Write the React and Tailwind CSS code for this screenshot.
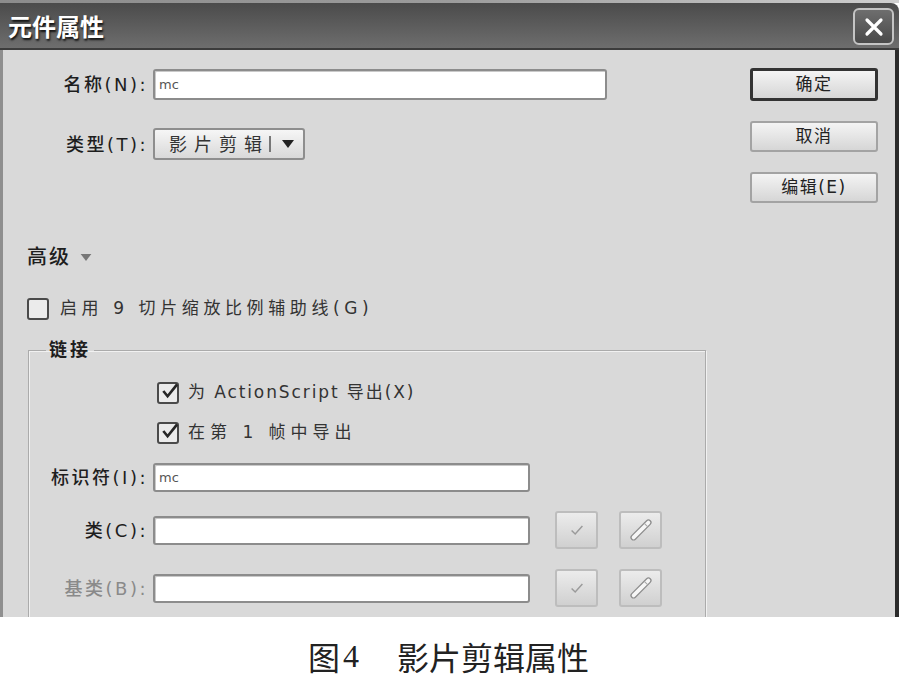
import React from "react";

function CheckBox({ checked }) {
  return (
    <span className="flex items-center justify-center w-[22px] h-[22px] border-2 border-[#4a4a4a] rounded-[3px] bg-[#ebebeb] shrink-0">
      {checked && (
        <svg viewBox="0 0 20 20" className="w-[19px] h-[19px] -mt-[3px] -mr-[3px]">
          <path d="M3.5 9.5l4.5 5.5L18 2.5" fill="none" stroke="#262626" strokeWidth="2.8" />
        </svg>
      )}
    </span>
  );
}

function Field({ className, value }) {
  return (
    <div
      className={
        "flex items-center pl-[4px] bg-white border-2 border-[#8c8c8c] rounded-[3px] shadow-[inset_1px_1px_0_#c9c9c9] text-[13px] text-[#555] font-['DejaVu_Sans',sans-serif] " +
        className
      }
    >
      {value}
    </div>
  );
}

function Btn({ children, primary }) {
  return (
    <div
      className={
        "flex items-center justify-center w-[128px] rounded-[3px] bg-gradient-to-b from-[#f4f4f4] to-[#d6d6d6] text-[17px] tracking-[1.5px] text-[#222] " +
        (primary
          ? "h-[33px] border-[3px] border-[#333]"
          : "h-[31px] border-2 border-[#a3a3a3]")
      }
    >
      {children}
    </div>
  );
}

function IconBtn({ children }) {
  return (
    <div className="flex items-center justify-center w-[43px] h-[38px] rounded-[3px] border-2 border-[#bdbdbd] bg-gradient-to-b from-[#ececec] to-[#d0d0d0]">
      {children}
    </div>
  );
}

function CheckIcon() {
  return (
    <svg viewBox="0 0 20 20" className="w-[18px] h-[18px]">
      <path d="M4 10.5l4 4L16 5.5" fill="none" stroke="#9a9a9a" strokeWidth="1.6" />
    </svg>
  );
}

function PencilIcon() {
  return (
    <svg viewBox="0 0 30 30" className="w-[30px] h-[30px]">
      <g transform="rotate(-45 15 15)">
        <rect x="2" y="12.5" width="26" height="5" rx="2.5" fill="#f6f6f6" stroke="#8e8e8e" strokeWidth="1.3" />
        <line x1="22" y1="13" x2="22" y2="17" stroke="#a8a8a8" strokeWidth="1" />
      </g>
    </svg>
  );
}

function FieldRow({ label, labelClass, children }) {
  return (
    <div className="flex items-center">
      <div className={"text-right text-[18px] tracking-[2.5px] font-medium " + labelClass}>{label}</div>
      {children}
    </div>
  );
}

export default function App() {
  return (
    <div className="w-[912px] h-[678px] bg-white overflow-hidden font-['DejaVu_Sans','Noto_Sans_CJK_SC',sans-serif] text-[#1e1e1e]">
      <div className="w-[899px]">
        {/* title bar */}
        <div className="h-[3px] bg-gradient-to-r from-[#8c8c8c] via-[#9c9c9c] to-[#cfcfcf]" />
        <div className="h-[47px] flex items-center justify-between pl-[8px] pr-[5px] rounded-tr-[8px] bg-gradient-to-b from-[#4b4b4b] to-[#6e6e6e] border-b-2 border-[#3c3c3c]">
          <span className="text-white text-[24px] font-bold leading-none [text-shadow:1px_2px_2px_#111] font-['Noto_Sans_CJK_SC',sans-serif]">
            元件属性
          </span>
          <div className="mt-[2px] flex items-center justify-center w-[41px] h-[37px] rounded-[6px] border-2 border-[#c4c4c4] bg-gradient-to-b from-[#6e6e6e] to-[#4a4a4a]">
            <svg viewBox="0 0 24 24" className="w-[24px] h-[24px]">
              <path d="M5 5L19 19M19 5L5 19" stroke="#fff" strokeWidth="3.2" strokeLinecap="round" />
            </svg>
          </div>
        </div>

        {/* body */}
        <div className="flex h-[567px] overflow-hidden bg-[#d9d9d9] border-l-[3px] border-l-[#8f8f8f] border-r-4 border-r-[#2b2b2b]">
          <div className="w-[725px] flex flex-col shrink-0">
            <div className="mt-[19px]">
              <FieldRow label="名称(N):" labelClass="w-[145px]">
                <Field className="ml-[5px] w-[454px] h-[31px]" value="mc" />
              </FieldRow>
            </div>
            <div className="mt-[28px]">
              <FieldRow label="类型(T):" labelClass="w-[145px]">
                <div className="ml-[5px] w-[152px] h-[32px] flex items-center pl-[14px] rounded-[3px] border-2 border-[#8e8e8e] bg-gradient-to-b from-[#f6f6f6] to-[#d9d9d9]">
                  <span className="text-[18px] tracking-[7px] text-[#333]">影片剪辑</span>
                  <span className="w-[2px] h-[16px] bg-[#777]" />
                  <svg viewBox="0 0 12 10" className="ml-[10px] w-[14px] h-[10px]">
                    <path d="M0 1h12L6 9z" fill="#222" />
                  </svg>
                </div>
              </FieldRow>
            </div>

            <div className="mt-[85px] ml-[24px] flex items-center leading-[24px] text-[20px] tracking-[2px] font-medium">
              高级
              <svg viewBox="0 0 12 10" className="ml-[9px] w-[12px] h-[9px]">
                <path d="M0 1h12L6 9z" fill="#777" />
              </svg>
            </div>

            <div className="mt-[29px] ml-[24px] flex items-center gap-[11px] h-[22px] text-[17px] tracking-[4.6px] text-[#333]">
              <CheckBox />
              <span>启用 9 切片缩放比例辅助线(G)</span>
            </div>

            <fieldset className="mt-[18px] ml-[25px] w-[678px] pb-[40px] border border-[#ababab] shadow-[inset_1px_1px_0_#f1f1f1,1px_1px_0_#f1f1f1]">
              <legend className="ml-[17px] px-[3px] leading-[24px] text-[18px] font-bold tracking-[3px]">链接</legend>

              <div className="mt-[20px] pl-[128px] flex items-center gap-[9px] h-[22px] text-[17px] tracking-[1.9px] text-[#333]">
                <CheckBox checked />
                <span>为 ActionScript 导出(X)</span>
              </div>
              <div className="mt-[18px] pl-[128px] flex items-center gap-[9px] h-[22px] text-[17px] tracking-[5px] text-[#333]">
                <CheckBox checked />
                <span>在第 1 帧中导出</span>
              </div>

              <div className="mt-[19px]">
                <FieldRow label="标识符(I):" labelClass="w-[119px] font-bold">
                  <Field className="ml-[5px] w-[377px] h-[29px]" value="mc" />
                </FieldRow>
              </div>
              <div className="mt-[19px]">
                <FieldRow label="类(C):" labelClass="w-[119px] font-bold">
                  <Field className="ml-[5px] w-[377px] h-[29px]" value="" />
                  <div className="ml-[25px]">
                    <IconBtn>
                      <CheckIcon />
                    </IconBtn>
                  </div>
                  <div className="ml-[21px]">
                    <IconBtn>
                      <PencilIcon />
                    </IconBtn>
                  </div>
                </FieldRow>
              </div>
              <div className="mt-[20px]">
                <FieldRow label="基类(B):" labelClass="w-[119px] text-[#8a8a8a]">
                  <Field className="ml-[5px] w-[377px] h-[29px]" value="" />
                  <div className="ml-[25px]">
                    <IconBtn>
                      <CheckIcon />
                    </IconBtn>
                  </div>
                  <div className="ml-[21px]">
                    <IconBtn>
                      <PencilIcon />
                    </IconBtn>
                  </div>
                </FieldRow>
              </div>
            </fieldset>
          </div>

          <div className="ml-[22px] mt-[18px] flex flex-col gap-[20px] w-[128px]">
            <Btn primary>确定</Btn>
            <Btn>取消</Btn>
            <Btn>编辑(E)</Btn>
          </div>
        </div>
      </div>

      {/* caption */}
      <div className="pt-[18px] pl-[308px] flex items-center leading-[42px] text-[32px] text-[#222] font-['Noto_Sans_CJK_SC',serif]">
        <span>图</span>
        <span className="ml-[3px] font-['Liberation_Serif',serif]">4</span>
        <span className="ml-[38px]">影片剪辑属性</span>
      </div>
    </div>
  );
}
